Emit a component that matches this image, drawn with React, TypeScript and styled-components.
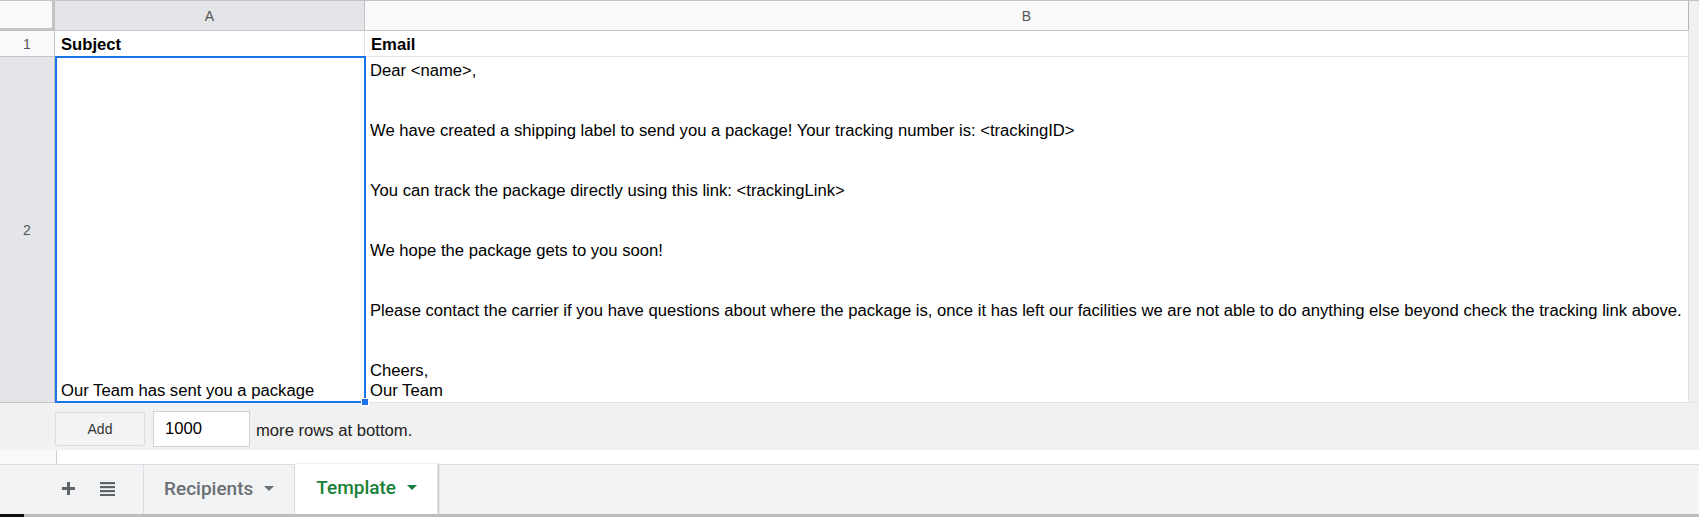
import styled, { createGlobalStyle } from "styled-components";

const GlobalStyle = createGlobalStyle`
  * {
    box-sizing: border-box;
  }
  body {
    margin: 0;
    background: #fff;
    font-family: "Liberation Sans", Arial, sans-serif;
  }
`;

const Page = styled.div`
  width: 1699px;
  height: 517px;
  display: flex;
  flex-direction: column;
  overflow: hidden;
`;

const SheetArea = styled.div`
  display: flex;
  border-top: 1px solid #c4c4c4;
`;

const Grid = styled.div`
  display: grid;
  grid-template-columns: 55px 310px 1324px;
  grid-template-rows: 30px 26px 346px;
`;

const Corner = styled.div`
  background: #f8f9fa;
  border-right: 3px solid #c2c2c2;
  border-bottom: 3px solid #c2c2c2;
`;

const ColHeader = styled.div<{ $selected?: boolean; $last?: boolean }>`
  display: flex;
  align-items: center;
  justify-content: center;
  background: ${(p) => (p.$selected ? "#e3e5e8" : "#f8f9fa")};
  border-right: 1px solid ${(p) => (p.$last ? "#b5b5b5" : "#c4c4c4")};
  border-bottom: 1px solid #c4c4c4;
  color: #555;
  font-size: 14px;
`;

const RowHeader = styled.div<{ $selected?: boolean }>`
  display: flex;
  align-items: center;
  justify-content: center;
  background: ${(p) => (p.$selected ? "#e3e5e8" : "#f8f9fa")};
  border-right: 1px solid #c4c4c4;
  border-bottom: 1px solid #c4c4c4;
  color: #555;
  font-size: 14px;
`;

const Cell = styled.div<{ $bold?: boolean; $top?: boolean }>`
  position: relative;
  display: flex;
  flex-direction: column;
  justify-content: ${(p) => (p.$top ? "flex-start" : "flex-end")};
  padding: ${(p) => (p.$top ? "4px 5px 0 5px" : "0 5px 1px 6px")};
  border-right: 1px solid #e2e2e2;
  border-bottom: 1px solid #e2e2e2;
  background: #fff;
  color: #000;
  font-size: 16.65px;
  line-height: 20px;
  font-weight: ${(p) => (p.$bold ? 700 : 400)};
  white-space: pre;
  overflow: visible;
`;

const SelectedCell = styled(Cell)`
  z-index: 2;
`;

const SelectionBox = styled.div`
  position: absolute;
  top: -1px;
  left: 0;
  right: -2px;
  bottom: -1px;
  border: 2px solid #1a73e8;
  pointer-events: none;
`;

const FillHandle = styled.div`
  position: absolute;
  right: -5px;
  bottom: -4px;
  width: 8px;
  height: 8px;
  background: #1a73e8;
  border: 1px solid #fff;
`;

const ScrollTrack = styled.div`
  width: 10px;
  background: #f0f0f0;
  border-bottom: 1px solid #e2e2e2;
`;

const AddRowsBar = styled.div`
  height: 47px;
  display: flex;
  align-items: center;
  padding: 8px 0 3px 55px;
  background: #f1f1f1;
`;

const AddButton = styled.div`
  width: 90px;
  height: 34px;
  display: flex;
  align-items: center;
  justify-content: center;
  background: #f3f3f3;
  border: 1px solid #dcdcdc;
  border-radius: 2px;
  color: #333;
  font-size: 14px;
`;

const RowsInput = styled.div`
  width: 97px;
  height: 36px;
  margin-left: 8px;
  display: flex;
  align-items: center;
  padding-left: 11px;
  background: #fff;
  border: 1px solid #d2d2d2;
  color: #000;
  font-size: 16.65px;
`;

const AddLabel = styled.span`
  margin-left: 6px;
  padding-top: 4px;
  color: #222;
  font-size: 16.65px;
`;

const GapRow = styled.div`
  height: 14px;
  display: flex;
`;

const GapHeader = styled.div`
  width: 57px;
  background: #f8f9fa;
  border-right: 1px solid #cfcfcf;
`;

const TabBar = styled.div`
  height: 50px;
  display: flex;
  background: #f1f3f4;
  border-top: 1px solid #dadce0;
  font-family: Roboto, "Liberation Sans", sans-serif;
`;

const TabControls = styled.div`
  width: 144px;
  display: flex;
  align-items: center;
  padding-left: 62px;
  padding-bottom: 2px;
  gap: 25px;
  border-right: 1px solid #dadce0;
`;

const Tab = styled.div<{ $active?: boolean }>`
  display: flex;
  align-items: center;
  gap: 11px;
  padding: 0 20px 3px ${(p) => (p.$active ? "21px" : "20px")};
  margin-top: ${(p) => (p.$active ? "-1px" : "0")};
  background: ${(p) => (p.$active ? "#fff" : "transparent")};
  border-right: 1px solid #dadce0;
  box-shadow: ${(p) => (p.$active ? "1px 0 2px rgba(60, 64, 67, 0.25)" : "none")};
  color: ${(p) => (p.$active ? "#188038" : "#6b6f74")};
  font-size: 19px;
  font-weight: 500;
`;

const BottomEdge = styled.div`
  height: 3px;
  display: flex;
  background: #bdbdbd;
`;

const EdgeDark = styled.div`
  width: 24px;
  background: #111;
`;

const PlusIcon = () => (
  <svg width="13" height="13" viewBox="0 0 13 13">
    <rect x="5" y="0" width="3" height="13" fill="#5f6368" />
    <rect x="0" y="5" width="13" height="3" fill="#5f6368" />
  </svg>
);

const ListIcon = () => (
  <svg width="15" height="14" viewBox="0 0 15 14">
    {[0, 4, 8, 12].map((y) => (
      <rect key={y} x="0" y={y} width="15" height="2.2" fill="#5f6368" />
    ))}
  </svg>
);

const Caret = ({ color }: { color: string }) => (
  <svg width="10" height="5" viewBox="0 0 10 5">
    <polygon points="0,0 10,0 5,5" fill={color} />
  </svg>
);

const emailBody = [
  "Dear <name>,",
  "",
  "",
  "We have created a shipping label to send you a package! Your tracking number is: <trackingID>",
  "",
  "",
  "You can track the package directly using this link: <trackingLink>",
  "",
  "",
  "We hope the package gets to you soon!",
  "",
  "",
  "Please contact the carrier if you have questions about where the package is, once it has left our facilities we are not able to do anything else beyond check the tracking link above.",
  "",
  "",
  "Cheers,",
  "Our Team",
].join("\n");

const App = () => {
  return (
    <Page>
      <GlobalStyle />
      <SheetArea>
        <Grid>
          <Corner />
          <ColHeader $selected>A</ColHeader>
          <ColHeader $last>B</ColHeader>

          <RowHeader>1</RowHeader>
          <Cell $bold>Subject</Cell>
          <Cell $bold>Email</Cell>

          <RowHeader $selected>2</RowHeader>
          <SelectedCell>
            Our Team has sent you a package
            <SelectionBox />
            <FillHandle />
          </SelectedCell>
          <Cell $top>{emailBody}</Cell>
        </Grid>
        <ScrollTrack />
      </SheetArea>

      <AddRowsBar>
        <AddButton>Add</AddButton>
        <RowsInput>1000</RowsInput>
        <AddLabel>more rows at bottom.</AddLabel>
      </AddRowsBar>

      <GapRow>
        <GapHeader />
      </GapRow>

      <TabBar>
        <TabControls>
          <PlusIcon />
          <ListIcon />
        </TabControls>
        <Tab>
          Recipients
          <Caret color="#6b6f74" />
        </Tab>
        <Tab $active>
          Template
          <Caret color="#188038" />
        </Tab>
      </TabBar>

      <BottomEdge>
        <EdgeDark />
      </BottomEdge>
    </Page>
  );
};

export default App;
